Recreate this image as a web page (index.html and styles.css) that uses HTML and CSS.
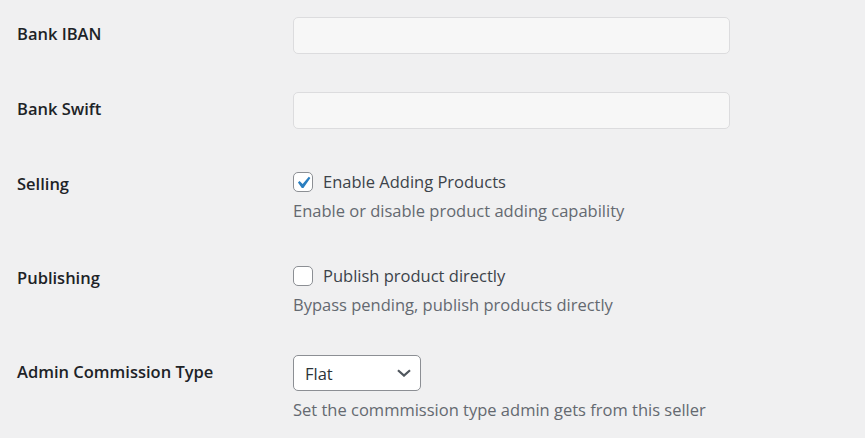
FILE: index.html
```html
<!DOCTYPE html>
<html>
<head>
<meta charset="utf-8">
<link rel="stylesheet" href="styles.css">
</head>
<body>
<div class="form">
  <div class="row">
    <div class="label">Bank IBAN</div>
    <div class="field"><input class="text" type="text"></div>
  </div>
  <div class="row">
    <div class="label">Bank Swift</div>
    <div class="field"><input class="text" type="text"></div>
  </div>
  <div class="row row-check">
    <div class="label">Selling</div>
    <div class="field">
      <label class="check"><span class="box checked"><svg viewBox="0 0 20 20" width="24" height="24"><path d="M14.83 4.89l1.34.94-5.81 8.38H9.02L5.78 9.67l1.34-1.25 2.57 2.4z" fill="#2a7fc0"/></svg></span>Enable Adding Products</label>
      <p class="desc">Enable or disable product adding capability</p>
    </div>
  </div>
  <div class="row row-check">
    <div class="label">Publishing</div>
    <div class="field">
      <label class="check"><span class="box"></span>Publish product directly</label>
      <p class="desc">Bypass pending, publish products directly</p>
    </div>
  </div>
  <div class="row">
    <div class="label">Admin Commission Type</div>
    <div class="field">
      <div class="select"><span>Flat</span><svg viewBox="0 0 14 8" width="14" height="8"><path d="M1 1.2l6 5.4 6-5.4" fill="none" stroke="#50575e" stroke-width="2.2"/></svg></div>
      <p class="desc desc-select">Set the commmission type admin gets from this seller</p>
    </div>
  </div>
</div>
</body>
</html>
```

FILE: styles.css
```css
html, body {
  margin: 0;
  padding: 0;
  background: #f0f0f1;
}
body {
  font-family: "Open Sans", "Noto Sans", sans-serif;
  font-size: 16.5px;
  color: #1d2327;
  overflow: hidden;
}
.form {
  margin-top: -2px;
  padding-left: 17px;
}
.row {
  display: grid;
  grid-template-columns: 276px 437px;
}
.label {
  padding-top: 23px;
  line-height: 26px;
  font-weight: 600;
}
.field {
  padding: 19px 0;
}
.row-check .field {
  padding: 21px 0 18px;
}
.text {
  display: block;
  box-sizing: border-box;
  width: 437px;
  height: 37px;
  margin: 0;
  background: #f7f7f7;
  border: 1px solid #dcdcde;
  border-radius: 5px;
  outline: none;
}
.check {
  display: flex;
  align-items: center;
  height: 26px;
  line-height: 26px;
  color: #3c434a;
}
.box {
  box-sizing: border-box;
  width: 20px;
  height: 20px;
  margin-right: 10px;
  border: 1px solid #8c8f94;
  border-radius: 5px;
  background: #fff;
  display: flex;
  align-items: center;
  justify-content: center;
  overflow: visible;
}
.box svg {
  display: block;
  flex: none;
  margin: 1px 0 0 -1px;
}
.desc {
  margin: 3px 0 0;
  line-height: 26px;
  color: #646970;
}
.select {
  box-sizing: border-box;
  width: 128px;
  height: 36px;
  border: 1px solid #8c8f94;
  border-radius: 5px;
  background: #fff;
  display: flex;
  align-items: center;
  justify-content: space-between;
  padding: 0 9px 0 11px;
  color: #2c3338;
}
.select svg {
  display: block;
}
.desc-select {
  margin-top: 6px;
}
```
